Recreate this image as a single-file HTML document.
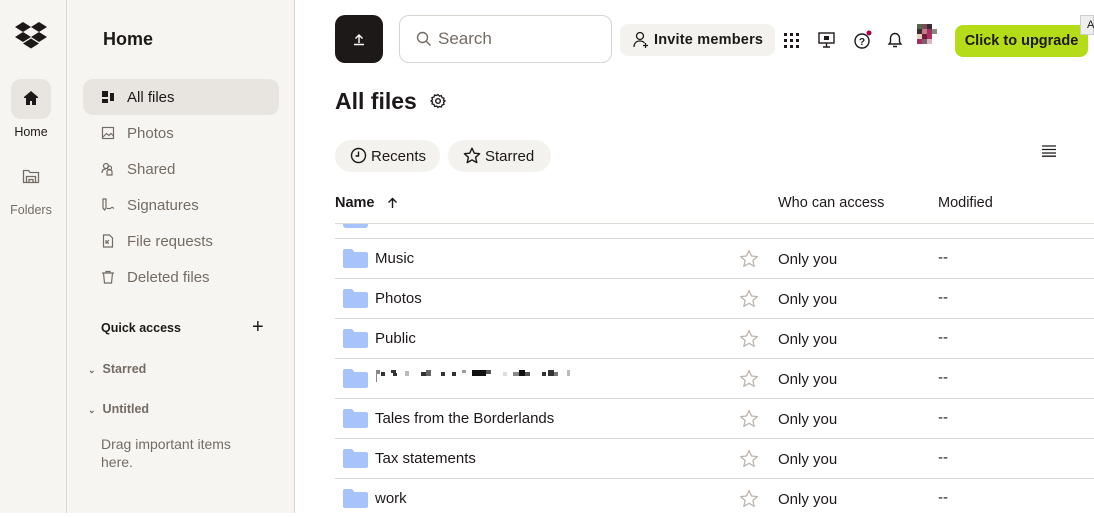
<!DOCTYPE html>
<html><head><meta charset="utf-8"><style>
*{margin:0;padding:0;box-sizing:border-box}
body{width:1094px;height:513px;overflow:hidden;background:#fff;font-family:"Liberation Sans",sans-serif;color:#1e1919;position:relative}
.a{position:absolute}
.rail{left:0;top:0;width:67px;height:513px;background:#f7f5f2;border-right:1px solid #dcd8d3}
.nav{left:67px;top:0;width:228px;height:513px;background:#f7f5f2;border-right:1px solid #dcd8d3}
.ni{position:absolute;left:16px;width:196px;height:36px;border-radius:10px;font-size:15px;color:#736c64;display:flex;align-items:center;padding-left:18px}
.ni svg{margin-right:12px}
.t15{font-size:15px}
.row{position:absolute;left:335px;width:759px;height:40px;border-top:1px solid #dedbd7}
.fold{position:absolute;left:8px;top:9px;width:25px;height:20px}
.nm{position:absolute;left:40px;top:11px;font-size:15px;color:#1e1919}
.st{position:absolute;left:404px;top:10px}
.oy{position:absolute;left:443px;top:12px;font-size:15px;color:#1e1919}
.md{position:absolute;left:603px;top:10px;font-size:15px;color:#1e1919}
</style></head><body>
<div class="a rail">
 <svg class="a" style="left:15px;top:22px" width="32" height="27" viewBox="0 0 32 27"><g fill="#1e1919"><path d="M8 0l8 5-8 5-8-5z"/><path d="M24 0l8 5-8 5-8-5z"/><path d="M0 15l8-5 8 5-8 5z"/><path d="M16 15l8-5 8 5-8 5z"/><path d="M8 21.5l8-5 8 5-8 5z"/></g></svg>
 <div class="a" style="left:11px;top:79px;width:40px;height:40px;border-radius:10px;background:#e8e5e1"></div>
 <svg class="a" style="left:22px;top:89px" width="18" height="18" viewBox="0 0 18 18"><path d="M9 2L2 8v1h2v7h4v-4h2v4h4V9h2V8z" fill="#1e1919"/></svg>
 <div class="a" style="left:0;width:62px;top:125px;text-align:center;font-size:12.5px">Home</div>
 <svg class="a" style="left:22px;top:168px" width="18" height="17" viewBox="0 0 18 17"><path d="M1.5 2.5h5l1.5 2h8.5v10h-15z M4.5 14.5v-6h9v6 M7 14.5v-3h4v3" fill="none" stroke="#736c64" stroke-width="1.3"/></svg>
 <div class="a" style="left:0;width:62px;top:203px;text-align:center;font-size:12.5px;color:#736c64">Folders</div>
</div>
<div class="a nav">
 <div class="a" style="left:36px;top:29px;font-size:18px;font-weight:bold">Home</div>
 <div class="ni" style="top:79px;background:#e8e5e1;color:#1e1919"><svg width="14" height="14" viewBox="0 0 14 14"><rect x="1" y="1" width="6" height="6" fill="#1e1919"/><rect x="1" y="9" width="6" height="4" fill="#1e1919"/><rect x="9" y="3" width="4" height="8" fill="#1e1919"/></svg>All files</div>
 <div class="ni" style="top:115px"><svg width="14" height="14" viewBox="0 0 14 14"><rect x="1.5" y="1.5" width="11" height="11" fill="none" stroke="#736c64" stroke-width="1.2"/><path d="M2 11l3.5-3.5 2.5 2 2-2 2.5 2.5" fill="none" stroke="#736c64" stroke-width="1.2"/></svg>Photos</div>
 <div class="ni" style="top:151px"><svg width="14" height="14" viewBox="0 0 14 14"><circle cx="5" cy="4" r="2.5" fill="none" stroke="#736c64" stroke-width="1.2"/><path d="M1 11c0-3 2-4 4-4M6 13v-3a2.5 2.5 0 015 0v3z" fill="none" stroke="#736c64" stroke-width="1.2"/><circle cx="8.5" cy="6" r="2" fill="none" stroke="#736c64" stroke-width="1.2"/></svg>Shared</div>
 <div class="ni" style="top:187px"><svg width="14" height="14" viewBox="0 0 14 14"><path d="M2 1v9l1.5 2 1.5-2V1zM6 11c2-2 2 1 4-1s2 1 3 0" fill="none" stroke="#736c64" stroke-width="1.2"/></svg>Signatures</div>
 <div class="ni" style="top:223px"><svg width="14" height="14" viewBox="0 0 14 14"><path d="M2.5 1h6l3 3v9h-9z M5 9l3-3M5 6v3h3" fill="none" stroke="#736c64" stroke-width="1.2"/></svg>File requests</div>
 <div class="ni" style="top:259px"><svg width="14" height="14" viewBox="0 0 14 14"><path d="M1 3h12M5 3V1.5h4V3M2.5 3l1 10h7l1-10" fill="none" stroke="#736c64" stroke-width="1.2"/></svg>Deleted files</div>
 <div class="a" style="left:34px;top:321px;font-size:12.5px;font-weight:bold">Quick access</div>
 <div class="a" style="left:185px;top:316px;font-size:20px;font-weight:300">+</div>
 <div class="a" style="left:21px;top:362px;font-size:12.5px;font-weight:bold;color:#736c64"><span style="font-size:9px;margin-right:7px">&#8964;</span>Starred</div>
 <div class="a" style="left:21px;top:402px;font-size:12.5px;font-weight:bold;color:#736c64"><span style="font-size:9px;margin-right:7px">&#8964;</span>Untitled</div>
 <div class="a" style="left:34px;top:435px;font-size:14px;color:#736c64;line-height:18px">Drag important items<br>here.</div>
</div>

<div class="a" style="left:335px;top:15px;width:48px;height:48px;border-radius:10px;background:#1e1919"></div>
<svg class="a" style="left:351px;top:31px" width="16" height="16" viewBox="0 0 16 16"><path d="M8 12V4M4.5 7.5L8 4l3.5 3.5M3 13.5h10" fill="none" stroke="#fff" stroke-width="1.4"/></svg>
<div class="a" style="left:399px;top:15px;width:213px;height:48px;border:1px solid #d8d4cf;border-radius:10px"></div>
<svg class="a" style="left:416px;top:31px" width="16" height="16" viewBox="0 0 16 16"><circle cx="6.5" cy="6.5" r="5" fill="none" stroke="#736c64" stroke-width="1.4"/><path d="M10 10l4.5 4.5" stroke="#736c64" stroke-width="1.4"/></svg>
<div class="a" style="left:438px;top:29px;font-size:17px;color:#736c64">Search</div>
<div class="a" style="left:620px;top:24px;width:155px;height:32px;border-radius:8px;background:#f4f2ef"></div>
<svg class="a" style="left:632px;top:31px" width="18" height="18" viewBox="0 0 18 18"><circle cx="8" cy="5" r="3.5" fill="none" stroke="#1e1919" stroke-width="1.3"/><path d="M2 16c0-4 2.5-6 6-6 2 0 3.5.6 4.5 2M13.5 12v5M11 14.5h5" fill="none" stroke="#1e1919" stroke-width="1.3"/></svg>
<div class="a" style="left:654px;top:32px;font-size:14.5px;font-weight:bold;color:#1e1919;letter-spacing:0.2px">Invite members</div>
<svg class="a" style="left:784px;top:33px" width="15" height="15" viewBox="0 0 15 15"><g fill="#1e1919"><rect x="0" y="0" width="3" height="3"/><rect x="6" y="0" width="3" height="3"/><rect x="12" y="0" width="3" height="3"/><rect x="0" y="6" width="3" height="3"/><rect x="6" y="6" width="3" height="3"/><rect x="12" y="6" width="3" height="3"/><rect x="0" y="12" width="3" height="3"/><rect x="6" y="12" width="3" height="3"/><rect x="12" y="12" width="3" height="3"/></g></svg>
<svg class="a" style="left:818px;top:32px" width="17" height="16" viewBox="0 0 17 16"><rect x="1" y="1" width="15" height="10" fill="none" stroke="#1e1919" stroke-width="1.4"/><rect x="6" y="4" width="5" height="4" fill="#1e1919"/><path d="M8.5 11v4M5 15h7" stroke="#1e1919" stroke-width="1.4"/></svg>
<svg class="a" style="left:853px;top:30px" width="20" height="20" viewBox="0 0 20 20"><circle cx="9" cy="11" r="7" fill="none" stroke="#1e1919" stroke-width="1.4"/><text x="9" y="15" font-size="10" text-anchor="middle" font-family="Liberation Sans" font-weight="bold" fill="#1e1919">?</text><circle cx="16" cy="3" r="2.5" fill="#b0004a"/></svg>
<svg class="a" style="left:886px;top:31px" width="18" height="18" viewBox="0 0 18 18"><path d="M3 13h12l-1.5-2V7a4.5 4.5 0 00-9 0v4zM7 15.5h4" fill="none" stroke="#1e1919" stroke-width="1.4"/></svg>
<svg class="a" style="left:917px;top:24px" width="20" height="20" viewBox="0 0 4 4"><rect width="1" height="1" fill="#556b47"/><rect x="1" width="1" height="1" fill="#7a4a5a"/><rect x="2" width="1" height="1" fill="#3a2a30"/><rect y="1" width="1" height="1" fill="#3d2b2b"/><rect x="1" y="1" width="1" height="1" fill="#c07a8a"/><rect x="2" y="1" width="1" height="1" fill="#a03060"/><rect x="3" y="1" width="1" height="1" fill="#8a8a80"/><rect y="2" width="1" height="1" fill="#e8d0c0"/><rect x="1" y="2" width="1" height="1" fill="#701a40"/><rect x="2" y="2" width="1" height="1" fill="#b03060"/><rect y="3" width="1" height="1" fill="#a03060"/><rect x="1" y="3" width="1" height="1" fill="#806070"/><rect x="2" y="3" width="1" height="1" fill="#d8b8c0"/></svg>
<div class="a" style="left:955px;top:25px;width:133px;height:32px;border-radius:8px;background:#b4dc19;font-size:14.5px;font-weight:bold;color:#1e1919;text-align:center;line-height:32px">Click to upgrade</div>
<div class="a" style="left:1080px;top:15px;width:14px;height:20px;background:#eeeeee;border:1px solid #ccc;font-size:11px;padding-left:6px;line-height:18px">A</div>

<div class="a" style="left:335px;top:88px;font-size:23px;font-weight:bold">All files</div>
<svg class="a" style="left:430px;top:93px" width="16" height="16" viewBox="0 0 16 16"><circle cx="8" cy="8" r="2.3" fill="none" stroke="#1e1919" stroke-width="1.4"/><path d="M8 1.5l1.4 1.6 2-.5.6 2 2 .6-.5 2L15 8l-1.5 1.4.5 2-2 .6-.6 2-2-.5L8 14.5l-1.4-1.5-2 .5-.6-2-2-.6.5-2L1 8l1.5-1.4-.5-2 2-.6.6-2 2 .5z" fill="none" stroke="#1e1919" stroke-width="1.3"/></svg>
<div class="a" style="left:335px;top:140px;width:105px;height:32px;border-radius:16px;background:#f4f2ef"></div>
<svg class="a" style="left:350px;top:147px" width="17" height="17" viewBox="0 0 17 17"><circle cx="8.5" cy="8.5" r="7" fill="none" stroke="#1e1919" stroke-width="1.4"/><path d="M8.5 4.5v4.5H5.5" fill="none" stroke="#1e1919" stroke-width="1.4"/></svg>
<div class="a t15" style="left:371px;top:148px">Recents</div>
<div class="a" style="left:448px;top:140px;width:103px;height:32px;border-radius:16px;background:#f4f2ef"></div>
<svg class="a" style="left:463px;top:147px" width="18" height="17" viewBox="0 0 18 17"><path d="M9 1.2l2.3 5 5.3.5-4 3.6 1.2 5.3L9 12.9l-4.8 2.7 1.2-5.3-4-3.6 5.3-.5z" fill="none" stroke="#1e1919" stroke-width="1.4" stroke-linejoin="round"/></svg>
<div class="a t15" style="left:485px;top:148px">Starred</div>
<svg class="a" style="left:1042px;top:145px" width="14" height="12" viewBox="0 0 14 12"><path d="M0 1h14M0 4.5h14M0 8h14M0 11.2h14" stroke="#1e1919" stroke-width="1.3"/></svg>

<div class="a" style="left:335px;top:195px;font-size:14.5px;font-weight:bold">Name</div>
<svg class="a" style="left:387px;top:197px" width="11" height="12" viewBox="0 0 11 12"><path d="M5.5 11V2M1.5 5.5l4-4 4 4" fill="none" stroke="#1e1919" stroke-width="1.4"/></svg>
<div class="a" style="left:778px;top:195px;font-size:14.5px">Who can access</div>
<div class="a" style="left:938px;top:195px;font-size:14.5px">Modified</div>

<div class="row" style="top:223px;height:15px;overflow:hidden">
 <div style="position:absolute;left:8px;top:-6px;width:25px;height:10px;background:#a6c4fb;border-radius:3px"></div>
</div>
<div class="row" style="top:238px"><svg class="fold" viewBox="0 0 25 20"><path d="M0 3a2 2 0 012-2h7l2.5 3H23a2 2 0 012 2v12a2 2 0 01-2 2H2a2 2 0 01-2-2z" fill="#a6c4fb"/></svg><div class="nm">Music</div><svg class="st" width="20" height="19" viewBox="0 0 20 19"><path d="M10 1.5l2.5 5.5 5.8.6-4.4 3.9 1.3 5.8L10 14.3l-5.2 3 1.3-5.8L1.7 7.6l5.8-.6z" fill="none" stroke="#bbb5ae" stroke-width="1.3" stroke-linejoin="round"/></svg><div class="oy">Only you</div><div class="md">--</div></div>
<div class="row" style="top:278px"><svg class="fold" viewBox="0 0 25 20"><path d="M0 3a2 2 0 012-2h7l2.5 3H23a2 2 0 012 2v12a2 2 0 01-2 2H2a2 2 0 01-2-2z" fill="#a6c4fb"/></svg><div class="nm">Photos</div><svg class="st" width="20" height="19" viewBox="0 0 20 19"><path d="M10 1.5l2.5 5.5 5.8.6-4.4 3.9 1.3 5.8L10 14.3l-5.2 3 1.3-5.8L1.7 7.6l5.8-.6z" fill="none" stroke="#bbb5ae" stroke-width="1.3" stroke-linejoin="round"/></svg><div class="oy">Only you</div><div class="md">--</div></div>
<div class="row" style="top:318px"><svg class="fold" viewBox="0 0 25 20"><path d="M0 3a2 2 0 012-2h7l2.5 3H23a2 2 0 012 2v12a2 2 0 01-2 2H2a2 2 0 01-2-2z" fill="#a6c4fb"/></svg><div class="nm">Public</div><svg class="st" width="20" height="19" viewBox="0 0 20 19"><path d="M10 1.5l2.5 5.5 5.8.6-4.4 3.9 1.3 5.8L10 14.3l-5.2 3 1.3-5.8L1.7 7.6l5.8-.6z" fill="none" stroke="#bbb5ae" stroke-width="1.3" stroke-linejoin="round"/></svg><div class="oy">Only you</div><div class="md">--</div></div>
<div class="row" style="top:358px"><svg class="fold" viewBox="0 0 25 20"><path d="M0 3a2 2 0 012-2h7l2.5 3H23a2 2 0 012 2v12a2 2 0 01-2 2H2a2 2 0 01-2-2z" fill="#a6c4fb"/></svg>
 <svg style="position:absolute;left:40px;top:10px" width="200" height="14" viewBox="0 0 200 14"><g fill="#333"><rect x="1" y="1" width="4" height="4" fill="#888"/><rect x="1" y="5" width="1" height="8" fill="#888"/><rect x="6" y="3" width="4" height="4"/><rect x="16" y="1" width="5" height="3"/><rect x="18" y="4" width="4" height="3"/><rect x="30" y="2" width="4" height="5" fill="#bbb"/><rect x="46" y="3" width="5" height="4"/><rect x="51" y="1" width="5" height="6" fill="#666"/><rect x="66" y="3" width="4" height="4"/><rect x="77" y="3" width="4" height="4"/><rect x="87" y="1" width="4" height="3" fill="#999"/><rect x="97" y="1" width="14" height="6" fill="#111"/><rect x="111" y="1" width="5" height="4" fill="#555"/><rect x="128" y="3" width="4" height="4" fill="#ddd"/><rect x="138" y="3" width="6" height="4" fill="#888"/><rect x="144" y="1" width="6" height="6" fill="#111"/><rect x="150" y="3" width="5" height="4" fill="#555"/><rect x="167" y="3" width="4" height="4"/><rect x="173" y="1" width="6" height="6"/><rect x="179" y="3" width="4" height="4" fill="#777"/><rect x="192" y="1" width="3" height="6" fill="#bbb"/></g></svg>
 <svg class="st" width="20" height="19" viewBox="0 0 20 19"><path d="M10 1.5l2.5 5.5 5.8.6-4.4 3.9 1.3 5.8L10 14.3l-5.2 3 1.3-5.8L1.7 7.6l5.8-.6z" fill="none" stroke="#bbb5ae" stroke-width="1.3" stroke-linejoin="round"/></svg><div class="oy">Only you</div><div class="md">--</div></div>
<div class="row" style="top:398px"><svg class="fold" viewBox="0 0 25 20"><path d="M0 3a2 2 0 012-2h7l2.5 3H23a2 2 0 012 2v12a2 2 0 01-2 2H2a2 2 0 01-2-2z" fill="#a6c4fb"/></svg><div class="nm">Tales from the Borderlands</div><svg class="st" width="20" height="19" viewBox="0 0 20 19"><path d="M10 1.5l2.5 5.5 5.8.6-4.4 3.9 1.3 5.8L10 14.3l-5.2 3 1.3-5.8L1.7 7.6l5.8-.6z" fill="none" stroke="#bbb5ae" stroke-width="1.3" stroke-linejoin="round"/></svg><div class="oy">Only you</div><div class="md">--</div></div>
<div class="row" style="top:438px"><svg class="fold" viewBox="0 0 25 20"><path d="M0 3a2 2 0 012-2h7l2.5 3H23a2 2 0 012 2v12a2 2 0 01-2 2H2a2 2 0 01-2-2z" fill="#a6c4fb"/></svg><div class="nm">Tax statements</div><svg class="st" width="20" height="19" viewBox="0 0 20 19"><path d="M10 1.5l2.5 5.5 5.8.6-4.4 3.9 1.3 5.8L10 14.3l-5.2 3 1.3-5.8L1.7 7.6l5.8-.6z" fill="none" stroke="#bbb5ae" stroke-width="1.3" stroke-linejoin="round"/></svg><div class="oy">Only you</div><div class="md">--</div></div>
<div class="row" style="top:478px"><svg class="fold" viewBox="0 0 25 20"><path d="M0 3a2 2 0 012-2h7l2.5 3H23a2 2 0 012 2v12a2 2 0 01-2 2H2a2 2 0 01-2-2z" fill="#a6c4fb"/></svg><div class="nm">work</div><svg class="st" width="20" height="19" viewBox="0 0 20 19"><path d="M10 1.5l2.5 5.5 5.8.6-4.4 3.9 1.3 5.8L10 14.3l-5.2 3 1.3-5.8L1.7 7.6l5.8-.6z" fill="none" stroke="#bbb5ae" stroke-width="1.3" stroke-linejoin="round"/></svg><div class="oy">Only you</div><div class="md">--</div></div>
</body></html>
